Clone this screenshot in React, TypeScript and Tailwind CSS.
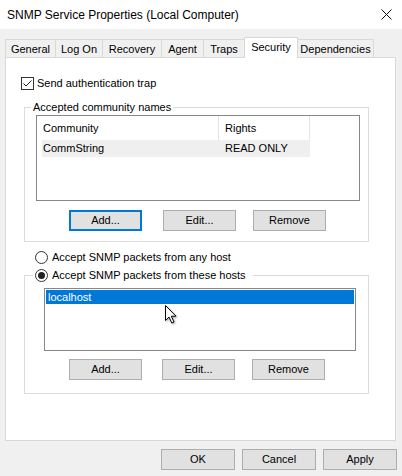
import React from "react";

const tabs = [
  { label: "General", w: "w-[51px]" },
  { label: "Log On", w: "w-[48px]" },
  { label: "Recovery", w: "w-[60px]" },
  { label: "Agent", w: "w-[43px]" },
  { label: "Traps", w: "w-[42px]" },
  { label: "Security", w: "w-[54px]", active: true },
  { label: "Dependencies", w: "w-[77px]" },
];

function CheckBox({ checked }: { checked?: boolean }) {
  return (
    <svg width="13" height="13" viewBox="0 0 13 13" className="shrink-0">
      <rect x="0.5" y="0.5" width="12" height="12" fill="#fff" stroke="#333" />
      {checked && (
        <path d="M2.5 6.5 L5 9 L10.5 3.5" fill="none" stroke="#222" strokeWidth="1" />
      )}
    </svg>
  );
}

function Radio({ checked }: { checked?: boolean }) {
  return (
    <svg width="13" height="13" viewBox="0 0 13 13" className="shrink-0">
      <circle cx="6.5" cy="6.5" r="6" fill="#fff" stroke="#333" />
      {checked && <circle cx="6.5" cy="6.5" r="3.5" fill="#222" />}
    </svg>
  );
}

function Button({
  children,
  focused,
  className = "",
}: {
  children: React.ReactNode;
  focused?: boolean;
  className?: string;
}) {
  return (
    <button
      className={`h-[21px] flex items-center justify-center bg-[#e1e1e1] text-black text-[11px] leading-none ${
        focused ? "border-2 border-[#0078d7]" : "border border-[#adadad]"
      } ${className}`}
    >
      {children}
    </button>
  );
}

function Cursor() {
  return (
    <svg
      width="14"
      height="21"
      viewBox="0 0 14 21"
      className="absolute left-[119px] top-[15px] drop-shadow-[1px_1px_1px_rgba(0,0,0,0.35)]"
    >
      <path
        d="M1.5 1.5 L1.5 16.5 L5 13 L7.8 19 L10 18 L7.3 12.2 L12 12.2 Z"
        fill="#fff"
        stroke="#000"
        strokeWidth="1"
        strokeLinejoin="miter"
      />
    </svg>
  );
}

export default function App() {
  return (
    <div className="w-[402px] h-[476px] bg-[#f0f0f0] text-black text-[11px] leading-[13px] font-['Liberation_Sans',Arial,sans-serif] overflow-hidden">
      {/* title bar */}
      <div className="h-[29px] bg-white flex items-center justify-between pl-[7px] pr-[9px]">
        <span className="text-[12px] leading-[14px] pt-[1px]">
          SNMP Service Properties (Local Computer)
        </span>
        <svg width="11" height="11" viewBox="0 0 11 11" className="mr-[1px]">
          <path d="M0.5 0.5 L10.5 10.5 M10.5 0.5 L0.5 10.5" stroke="#111" strokeWidth="1" />
        </svg>
      </div>

      {/* tabs */}
      <div className="mt-[8px] h-[20px] flex items-end pl-[5px]">
        {tabs.map((t, i) => (
          <div
            key={t.label}
            className={`${t.w} ${i > 0 ? "-ml-px" : ""} border-t border-l border-r border-[#d9d9d9] flex justify-center ${
              t.active
                ? "h-[21px] -mb-px bg-white relative z-10 pt-[3px]"
                : "h-[18px] bg-[#f0f0f0] pt-[3px]"
            }`}
          >
            {t.label}
          </div>
        ))}
      </div>

      {/* tab page */}
      <div className="ml-[5px] w-[391px] h-[384px] bg-white border border-[#d9d9d9] flex flex-col">
        <div className="mt-[19px] ml-[15px] flex items-center gap-[3px]">
          <CheckBox checked />
          <span>Send authentication trap</span>
        </div>

        <fieldset className="mt-[11px] ml-[18px] w-[345px] h-[141px] border border-[#dcdcdc] px-0">
          <legend className="ml-[6px] px-[2px]">Accepted community names</legend>
          <div className="pl-[11px] pt-[1px]">
            <div className="w-[324px] h-[86px] border border-[#828790] flex flex-col">
              <div className="h-[24px] flex items-stretch">
                <div className="w-[182px] border-r border-[#e5e5e5] pl-[6px] flex items-center">
                  Community
                </div>
                <div className="w-[91px] border-r border-[#e5e5e5] pl-[6px] flex items-center">
                  Rights
                </div>
              </div>
              <div className="ml-[5px] w-[268px] h-[17px] bg-[#efefef] flex items-center">
                <span className="w-[177px] pl-[1px]">CommString</span>
                <span className="pl-[6px]">READ ONLY</span>
              </div>
            </div>
            <div className="mt-[9px] flex">
              <Button focused className="ml-[33px] w-[73px]">
                Add...
              </Button>
              <Button className="ml-[21px] w-[73px]">Edit...</Button>
              <Button className="ml-[17px] w-[73px]">Remove</Button>
            </div>
          </div>
        </fieldset>

        <div className="mt-[9px] ml-[29px] flex items-center gap-[4px]">
          <Radio />
          <span>Accept SNMP packets from any host</span>
        </div>

        <fieldset className="mt-[5px] ml-[18px] w-[345px] h-[125px] border border-[#dcdcdc] px-0">
          <legend className="ml-[8px] pl-[2px] pr-[7px]">
            <span className="flex items-center gap-[4px]">
              <Radio checked />
              <span>Accept SNMP packets from these hosts</span>
            </span>
          </legend>
          <div className="pl-[19px] pt-[6px]">
            <div className="relative w-[312px] h-[63px] border border-[#828790] p-[1px]">
              <div className="h-[14px] bg-[#0078d7] text-white pl-[2px] flex items-center">
                localhost
              </div>
              <Cursor />
            </div>
            <div className="mt-[8px] flex">
              <Button className="ml-[25px] w-[73px]">Add...</Button>
              <Button className="ml-[20px] w-[73px]">Edit...</Button>
              <Button className="ml-[17px] w-[73px]">Remove</Button>
            </div>
          </div>
        </fieldset>
      </div>

      {/* dialog buttons */}
      <div className="mt-[8px] flex justify-end gap-[7px] pr-[5px]">
        <Button className="w-[74px]">OK</Button>
        <Button className="w-[74px]">Cancel</Button>
        <Button className="w-[74px]">Apply</Button>
      </div>
    </div>
  );
}
